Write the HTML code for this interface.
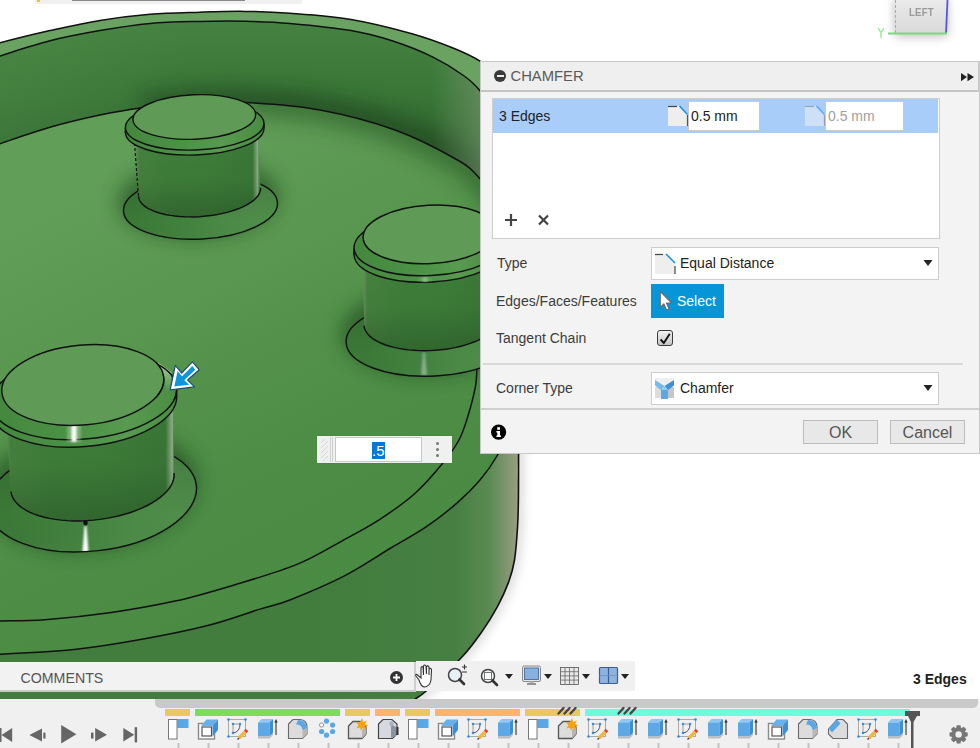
<!DOCTYPE html>
<html><head><meta charset="utf-8">
<style>
*{box-sizing:border-box;margin:0;padding:0}
html,body{width:980px;height:748px;overflow:hidden;background:#fff;font-family:"Liberation Sans",sans-serif;color:#3c3c3c;position:relative}
.abs{position:absolute;white-space:nowrap;line-height:normal}
#model{position:absolute;left:0;top:0}
.t14{font-size:14px}
</style></head>
<body>
<svg id="model" width="980" height="748" viewBox="0 0 980 748"><defs>
<linearGradient id="gWall" gradientUnits="userSpaceOnUse" x1="0" y1="20" x2="0" y2="180"><stop offset="0" stop-color="#468342"/><stop offset="0.45" stop-color="#3a7737"/><stop offset="1" stop-color="#2c5e2b"/></linearGradient>
<linearGradient id="gWallH" gradientUnits="userSpaceOnUse" x1="0" y1="0" x2="480" y2="0"><stop offset="0" stop-color="#5a9652" stop-opacity="0.3"/><stop offset="0.4" stop-color="#5a9652" stop-opacity="0"/><stop offset="0.9" stop-color="#8fa386" stop-opacity="0"/><stop offset="1" stop-color="#8fa386" stop-opacity="0.42"/></linearGradient>
<linearGradient id="gOuterWall" gradientUnits="userSpaceOnUse" x1="300" y1="0" x2="520" y2="0"><stop offset="0" stop-color="#427d3e"/><stop offset="0.7" stop-color="#467f41"/><stop offset="0.86" stop-color="#5a8a52"/><stop offset="1" stop-color="#9c9f87"/></linearGradient>
<linearGradient id="gFloor" gradientUnits="userSpaceOnUse" x1="150" y1="150" x2="380" y2="620"><stop offset="0" stop-color="#619e58"/><stop offset="0.3" stop-color="#59964f"/><stop offset="0.62" stop-color="#4d8d46"/><stop offset="1" stop-color="#498a42"/></linearGradient>
<filter id="blurA" x="-50%" y="-50%" width="200%" height="200%"><feGaussianBlur stdDeviation="6"/></filter>
<filter id="blurB" x="-50%" y="-50%" width="200%" height="200%"><feGaussianBlur stdDeviation="10"/></filter>
<filter id="blurS" x="-50%" y="-50%" width="200%" height="200%"><feGaussianBlur stdDeviation="9"/></filter>
<linearGradient id="gCyl1" gradientUnits="userSpaceOnUse" x1="134" y1="0" x2="259" y2="0"><stop offset="0" stop-color="#6f9668"/><stop offset="0.04" stop-color="#46823f"/><stop offset="0.3" stop-color="#3e7f3a"/><stop offset="0.6" stop-color="#3d7e39"/><stop offset="0.95" stop-color="#3a7837"/><stop offset="0.99" stop-color="#8fae89"/><stop offset="1" stop-color="#4e8849"/></linearGradient>
<linearGradient id="gCham1" gradientUnits="userSpaceOnUse" x1="134" y1="0" x2="259" y2="0"><stop offset="0" stop-color="#45893f"/><stop offset="0.45" stop-color="#4d9447"/><stop offset="0.7" stop-color="#579a50"/><stop offset="1" stop-color="#4a8d43"/></linearGradient>
<linearGradient id="gBase1" gradientUnits="userSpaceOnUse" x1="134" y1="0" x2="259" y2="0"><stop offset="0" stop-color="#3b7937"/><stop offset="0.45" stop-color="#438340"/><stop offset="0.75" stop-color="#4c8b47"/><stop offset="1" stop-color="#4f8d4a"/></linearGradient>
<clipPath id="cBase1"><ellipse cx="200.5" cy="207.0" rx="77.1" ry="32.0" transform="rotate(-3.2 200.5 207.0)" /></clipPath>
<clipPath id="cCham1"><ellipse cx="194.7" cy="130.5" rx="69.3" ry="24.5" transform="rotate(-1.9 194.7 130.5)" /></clipPath><linearGradient id="gCyl2" gradientUnits="userSpaceOnUse" x1="362" y1="0" x2="497" y2="0"><stop offset="0" stop-color="#6f9668"/><stop offset="0.04" stop-color="#46823f"/><stop offset="0.3" stop-color="#3e7f3a"/><stop offset="0.6" stop-color="#3d7e39"/><stop offset="0.95" stop-color="#3a7837"/><stop offset="0.99" stop-color="#8fae89"/><stop offset="1" stop-color="#4e8849"/></linearGradient>
<linearGradient id="gCham2" gradientUnits="userSpaceOnUse" x1="362" y1="0" x2="497" y2="0"><stop offset="0" stop-color="#45893f"/><stop offset="0.45" stop-color="#4d9447"/><stop offset="0.7" stop-color="#579a50"/><stop offset="1" stop-color="#4a8d43"/></linearGradient>
<linearGradient id="gBase2" gradientUnits="userSpaceOnUse" x1="362" y1="0" x2="497" y2="0"><stop offset="0" stop-color="#3b7937"/><stop offset="0.45" stop-color="#438340"/><stop offset="0.75" stop-color="#4c8b47"/><stop offset="1" stop-color="#4f8d4a"/></linearGradient>
<clipPath id="cBase2"><ellipse cx="433.0" cy="338.0" rx="87.0" ry="38.0" transform="rotate(-3 433.0 338.0)" /></clipPath>
<clipPath id="cCham2"><ellipse cx="430.0" cy="251.0" rx="76.0" ry="31.0" transform="rotate(-3 430.0 251.0)" /></clipPath><linearGradient id="gCyl3" gradientUnits="userSpaceOnUse" x1="4" y1="0" x2="174" y2="0"><stop offset="0" stop-color="#6f9668"/><stop offset="0.04" stop-color="#46823f"/><stop offset="0.3" stop-color="#3e7f3a"/><stop offset="0.6" stop-color="#3d7e39"/><stop offset="0.95" stop-color="#3a7837"/><stop offset="0.99" stop-color="#8fae89"/><stop offset="1" stop-color="#4e8849"/></linearGradient>
<linearGradient id="gCham3" gradientUnits="userSpaceOnUse" x1="4" y1="0" x2="174" y2="0"><stop offset="0" stop-color="#45893f"/><stop offset="0.45" stop-color="#4d9447"/><stop offset="0.7" stop-color="#579a50"/><stop offset="1" stop-color="#4a8d43"/></linearGradient>
<linearGradient id="gBase3" gradientUnits="userSpaceOnUse" x1="4" y1="0" x2="174" y2="0"><stop offset="0" stop-color="#3b7937"/><stop offset="0.45" stop-color="#438340"/><stop offset="0.75" stop-color="#4c8b47"/><stop offset="1" stop-color="#4f8d4a"/></linearGradient>
<clipPath id="cBase3"><ellipse cx="92.0" cy="497.0" rx="105.0" ry="54.0" transform="rotate(-6.5 92.0 497.0)" /></clipPath>
<clipPath id="cCham3"><ellipse cx="84.0" cy="403.5" rx="93.0" ry="43.0" transform="rotate(-5.3 84.0 403.5)" /></clipPath><linearGradient id="gCylV" x1="0" y1="0" x2="0" y2="1"><stop offset="0" stop-color="#000" stop-opacity="0"/><stop offset="0.55" stop-color="#000" stop-opacity="0.04"/><stop offset="1" stop-color="#000" stop-opacity="0.2"/></linearGradient><linearGradient id="gBaseV" x1="0" y1="0" x2="0" y2="1"><stop offset="0" stop-color="#000" stop-opacity="0.15"/><stop offset="0.6" stop-color="#000" stop-opacity="0.0"/><stop offset="1" stop-color="#fff" stop-opacity="0.05"/></linearGradient><filter id="blurH" x="-200%" y="-50%" width="500%" height="200%"><feGaussianBlur stdDeviation="1.2"/></filter><clipPath id="cWall"><path d="M-20.0 63.0 C-16.7 61.9 -11.7 59.8 0.0 56.1 C11.7 52.4 33.3 45.0 50.0 40.8 C66.7 36.5 83.3 33.5 100.0 30.6 C116.7 27.7 133.3 25.0 150.0 23.5 C166.7 22.0 184.2 21.8 200.0 21.4 C215.8 21.0 230.0 20.9 245.0 21.2 C260.0 21.6 272.3 21.9 290.0 23.5 C307.7 25.1 334.0 27.7 351.0 30.6 C368.0 33.5 378.3 36.4 392.0 40.8 C405.7 45.2 421.1 51.3 433.0 57.1 C444.9 62.9 455.7 69.9 463.5 75.5 C471.3 81.1 474.8 84.2 480.0 90.8 C485.2 97.4 492.5 111.0 495.0 115.0 L500.0 205.0 C496.7 200.6 487.1 186.2 480.0 178.8 C472.9 171.2 471.7 168.1 457.5 160.0 C443.3 151.9 417.9 138.3 395.0 130.0 C372.1 121.7 345.0 114.6 320.0 110.0 C295.0 105.4 266.7 103.6 245.0 102.5 C223.3 101.4 207.4 102.6 190.0 103.5 C172.6 104.4 155.8 106.1 140.8 108.0 C125.8 109.9 115.1 111.9 100.0 115.1 C84.9 118.3 66.7 122.5 50.0 127.3 C33.3 132.1 11.7 139.8 0.0 143.7 C-11.7 147.6 -16.7 149.8 -20.0 151.0 Z"/></clipPath></defs>
<g filter="url(#blurA)" opacity="0.25"><path d="M519.0 400.0 C518.9 409.0 518.7 437.3 518.6 454.0 C518.5 470.7 518.6 488.0 518.4 500.0 C518.2 512.0 518.2 516.0 517.6 526.0 C517.0 536.0 516.0 550.6 514.5 560.0 C513.0 569.4 511.4 574.6 508.5 582.4 C505.6 590.2 501.7 598.7 497.3 606.8 C492.9 614.9 488.2 622.7 482.3 631.1 C476.4 639.5 471.1 647.3 461.7 657.3 C452.3 667.3 434.1 683.9 426.2 691.0 C418.2 698.1 417.5 696.8 414.0 700.0 C410.5 703.2 406.5 708.3 405.0 710.0" fill="none" stroke="#000" stroke-width="6"/></g>
<path d="M-20.0 50.0 C-16.7 48.8 -11.7 46.1 0.0 42.9 C11.7 39.7 33.3 34.4 50.0 30.6 C66.7 26.9 83.3 23.1 100.0 20.4 C116.7 17.7 133.3 15.7 150.0 14.3 C166.7 12.9 184.2 12.7 200.0 12.2 C215.8 11.7 230.0 11.2 245.0 11.4 C260.0 11.6 272.3 12.0 290.0 13.3 C307.7 14.6 330.7 16.0 351.0 19.4 C371.3 22.8 395.0 28.9 412.0 33.7 C429.0 38.5 441.7 43.4 453.0 48.0 C464.3 52.6 472.2 55.9 480.0 61.2 C487.8 66.5 496.7 76.9 500.0 80.0 L530 120 L535 400 C532.3 409.0 521.4 437.3 518.6 454.0 C515.8 470.7 518.6 488.0 518.4 500.0 C518.2 512.0 518.2 516.0 517.6 526.0 C517.0 536.0 516.0 550.6 514.5 560.0 C513.0 569.4 511.4 574.6 508.5 582.4 C505.6 590.2 501.7 598.7 497.3 606.8 C492.9 614.9 488.2 622.7 482.3 631.1 C476.4 639.5 471.1 647.3 461.7 657.3 C452.3 667.3 434.1 683.9 426.2 691.0 C418.2 698.1 417.5 696.8 414.0 700.0 C410.5 703.2 406.5 708.3 405.0 710.0 L-20 720 Z" fill="url(#gFloor)"/>
<g filter="url(#blurB)" opacity="0.5"><path d="M245.0 102.5 C257.5 103.8 295.0 105.4 320.0 110.0 C345.0 114.6 372.1 121.7 395.0 130.0 C417.9 138.3 443.3 151.9 457.5 160.0 C471.7 168.1 472.9 171.2 480.0 178.8 C487.1 186.2 496.7 200.6 500.0 205.0" fill="none" stroke="#1f4a1f" stroke-width="26"/></g>
<path d="M-20.0 654.6 C-16.7 654.5 -15.7 655.1 0.0 654.2 C15.7 653.3 50.4 651.9 74.3 649.4 C98.2 646.9 120.8 643.1 143.3 639.0 C165.9 634.9 190.2 630.0 209.6 625.0 C229.0 620.0 246.6 613.3 260.0 609.1 C273.4 604.9 275.9 605.5 289.9 600.0 C303.9 594.5 327.1 584.9 343.9 576.2 C360.7 567.5 377.1 556.2 390.8 548.0 C404.5 539.8 415.1 534.3 426.1 526.9 C437.1 519.5 447.6 511.2 456.6 503.4 C465.6 495.6 473.3 487.9 480.0 480.0 C486.7 472.1 491.7 465.2 497.0 456.0 C502.3 446.8 509.5 430.2 512.0 425.0 L535 400 C532.3 409.0 521.4 437.3 518.6 454.0 C515.8 470.7 518.6 488.0 518.4 500.0 C518.2 512.0 518.2 516.0 517.6 526.0 C517.0 536.0 516.0 550.6 514.5 560.0 C513.0 569.4 511.4 574.6 508.5 582.4 C505.6 590.2 501.7 598.7 497.3 606.8 C492.9 614.9 488.2 622.7 482.3 631.1 C476.4 639.5 471.1 647.3 461.7 657.3 C452.3 667.3 434.1 683.9 426.2 691.0 C418.2 698.1 417.5 696.8 414.0 700.0 C410.5 703.2 406.5 708.3 405.0 710.0 L-20 720 Z" fill="url(#gOuterWall)"/>
<path d="M-20.0 63.0 C-16.7 61.9 -11.7 59.8 0.0 56.1 C11.7 52.4 33.3 45.0 50.0 40.8 C66.7 36.5 83.3 33.5 100.0 30.6 C116.7 27.7 133.3 25.0 150.0 23.5 C166.7 22.0 184.2 21.8 200.0 21.4 C215.8 21.0 230.0 20.9 245.0 21.2 C260.0 21.6 272.3 21.9 290.0 23.5 C307.7 25.1 334.0 27.7 351.0 30.6 C368.0 33.5 378.3 36.4 392.0 40.8 C405.7 45.2 421.1 51.3 433.0 57.1 C444.9 62.9 455.7 69.9 463.5 75.5 C471.3 81.1 474.8 84.2 480.0 90.8 C485.2 97.4 492.5 111.0 495.0 115.0 L500.0 205.0 C496.7 200.6 487.1 186.2 480.0 178.8 C472.9 171.2 471.7 168.1 457.5 160.0 C443.3 151.9 417.9 138.3 395.0 130.0 C372.1 121.7 345.0 114.6 320.0 110.0 C295.0 105.4 266.7 103.6 245.0 102.5 C223.3 101.4 207.4 102.6 190.0 103.5 C172.6 104.4 155.8 106.1 140.8 108.0 C125.8 109.9 115.1 111.9 100.0 115.1 C84.9 118.3 66.7 122.5 50.0 127.3 C33.3 132.1 11.7 139.8 0.0 143.7 C-11.7 147.6 -16.7 149.8 -20.0 151.0 Z" fill="url(#gWall)"/>
<g clip-path="url(#cWall)"><g filter="url(#blurB)" opacity="0.55"><path d="M140.8 108.0 C149.0 107.2 172.6 104.4 190.0 103.5 C207.4 102.6 223.3 101.4 245.0 102.5 C266.7 103.6 295.0 105.4 320.0 110.0 C345.0 114.6 372.1 121.7 395.0 130.0 C417.9 138.3 443.3 151.9 457.5 160.0 C471.7 168.1 472.9 171.2 480.0 178.8 C487.1 186.2 496.7 200.6 500.0 205.0" fill="none" stroke="#1a3c1a" stroke-width="30"/></g><path d="M-20.0 63.0 C-16.7 61.9 -11.7 59.8 0.0 56.1 C11.7 52.4 33.3 45.0 50.0 40.8 C66.7 36.5 83.3 33.5 100.0 30.6 C116.7 27.7 133.3 25.0 150.0 23.5 C166.7 22.0 184.2 21.8 200.0 21.4 C215.8 21.0 230.0 20.9 245.0 21.2 C260.0 21.6 272.3 21.9 290.0 23.5 C307.7 25.1 334.0 27.7 351.0 30.6 C368.0 33.5 378.3 36.4 392.0 40.8 C405.7 45.2 421.1 51.3 433.0 57.1 C444.9 62.9 455.7 69.9 463.5 75.5 C471.3 81.1 474.8 84.2 480.0 90.8 C485.2 97.4 492.5 111.0 495.0 115.0 L500.0 205.0 C496.7 200.6 487.1 186.2 480.0 178.8 C472.9 171.2 471.7 168.1 457.5 160.0 C443.3 151.9 417.9 138.3 395.0 130.0 C372.1 121.7 345.0 114.6 320.0 110.0 C295.0 105.4 266.7 103.6 245.0 102.5 C223.3 101.4 207.4 102.6 190.0 103.5 C172.6 104.4 155.8 106.1 140.8 108.0 C125.8 109.9 115.1 111.9 100.0 115.1 C84.9 118.3 66.7 122.5 50.0 127.3 C33.3 132.1 11.7 139.8 0.0 143.7 C-11.7 147.6 -16.7 149.8 -20.0 151.0 Z" fill="url(#gWallH)"/></g>
<path d="M-20.0 50.0 C-16.7 48.8 -11.7 46.1 0.0 42.9 C11.7 39.7 33.3 34.4 50.0 30.6 C66.7 26.9 83.3 23.1 100.0 20.4 C116.7 17.7 133.3 15.7 150.0 14.3 C166.7 12.9 184.2 12.7 200.0 12.2 C215.8 11.7 230.0 11.2 245.0 11.4 C260.0 11.6 272.3 12.0 290.0 13.3 C307.7 14.6 330.7 16.0 351.0 19.4 C371.3 22.8 395.0 28.9 412.0 33.7 C429.0 38.5 441.7 43.4 453.0 48.0 C464.3 52.6 472.2 55.9 480.0 61.2 C487.8 66.5 496.7 76.9 500.0 80.0 L495.0 115.0 C492.5 111.0 485.2 97.4 480.0 90.8 C474.8 84.2 471.3 81.1 463.5 75.5 C455.7 69.9 444.9 62.9 433.0 57.1 C421.1 51.3 405.7 45.2 392.0 40.8 C378.3 36.4 368.0 33.5 351.0 30.6 C334.0 27.7 307.7 25.1 290.0 23.5 C272.3 21.9 260.0 21.6 245.0 21.2 C230.0 20.9 215.8 21.0 200.0 21.4 C184.2 21.8 166.7 22.0 150.0 23.5 C133.3 25.0 116.7 27.7 100.0 30.6 C83.3 33.5 66.7 36.5 50.0 40.8 C33.3 45.0 11.7 52.4 0.0 56.1 C-11.7 59.8 -16.7 61.9 -20.0 63.0 Z" fill="#6aa361"/>
<path d="M-20.0 50.0 C-16.7 48.8 -11.7 46.1 0.0 42.9 C11.7 39.7 33.3 34.4 50.0 30.6 C66.7 26.9 83.3 23.1 100.0 20.4 C116.7 17.7 133.3 15.7 150.0 14.3 C166.7 12.9 184.2 12.7 200.0 12.2 C215.8 11.7 230.0 11.2 245.0 11.4 C260.0 11.6 272.3 12.0 290.0 13.3 C307.7 14.6 330.7 16.0 351.0 19.4 C371.3 22.8 395.0 28.9 412.0 33.7 C429.0 38.5 441.7 43.4 453.0 48.0 C464.3 52.6 472.2 55.9 480.0 61.2 C487.8 66.5 496.7 76.9 500.0 80.0" fill="none" stroke="#111" stroke-width="1.5"/>
<path d="M-20.0 63.0 C-16.7 61.9 -11.7 59.8 0.0 56.1 C11.7 52.4 33.3 45.0 50.0 40.8 C66.7 36.5 83.3 33.5 100.0 30.6 C116.7 27.7 133.3 25.0 150.0 23.5 C166.7 22.0 184.2 21.8 200.0 21.4 C215.8 21.0 230.0 20.9 245.0 21.2 C260.0 21.6 272.3 21.9 290.0 23.5 C307.7 25.1 334.0 27.7 351.0 30.6 C368.0 33.5 378.3 36.4 392.0 40.8 C405.7 45.2 421.1 51.3 433.0 57.1 C444.9 62.9 455.7 69.9 463.5 75.5 C471.3 81.1 474.8 84.2 480.0 90.8 C485.2 97.4 492.5 111.0 495.0 115.0" fill="none" stroke="#111" stroke-width="1.5"/>
<path d="M-20.0 151.0 C-16.7 149.8 -11.7 147.6 0.0 143.7 C11.7 139.8 33.3 132.1 50.0 127.3 C66.7 122.5 84.9 118.3 100.0 115.1 C115.1 111.9 125.8 109.9 140.8 108.0 C155.8 106.1 172.6 104.4 190.0 103.5 C207.4 102.6 223.3 101.4 245.0 102.5 C266.7 103.6 295.0 105.4 320.0 110.0 C345.0 114.6 372.1 121.7 395.0 130.0 C417.9 138.3 443.3 151.9 457.5 160.0 C471.7 168.1 472.9 171.2 480.0 178.8 C487.1 186.2 496.7 200.6 500.0 205.0" fill="none" stroke="#111" stroke-width="1.5"/>
<path d="M-20.0 621.5 C-16.7 621.4 -10.8 621.3 0.0 621.0 C10.8 620.7 26.5 621.1 45.1 619.7 C63.7 618.3 89.7 615.6 111.4 612.5 C133.1 609.4 154.8 605.6 175.1 601.1 C195.4 596.6 213.2 591.3 233.5 585.2 C253.8 579.1 278.5 572.0 296.9 564.4 C315.3 556.8 330.2 547.2 343.9 539.8 C357.6 532.4 367.4 527.4 379.1 519.8 C390.8 512.2 403.7 503.4 414.3 494.0 C424.9 484.6 435.1 472.5 442.5 463.5 C449.9 454.5 454.7 448.0 459.0 440.0 C463.3 432.0 465.4 424.4 468.1 415.5 C470.8 406.6 473.9 394.9 475.4 386.6 C476.9 378.3 476.6 372.4 477.0 365.5 C477.4 358.6 477.4 348.4 477.5 345.0" fill="none" stroke="#111" stroke-width="1.5"/>
<path d="M-20.0 654.6 C-16.7 654.5 -15.7 655.1 0.0 654.2 C15.7 653.3 50.4 651.9 74.3 649.4 C98.2 646.9 120.8 643.1 143.3 639.0 C165.9 634.9 190.2 630.0 209.6 625.0 C229.0 620.0 246.6 613.3 260.0 609.1 C273.4 604.9 275.9 605.5 289.9 600.0 C303.9 594.5 327.1 584.9 343.9 576.2 C360.7 567.5 377.1 556.2 390.8 548.0 C404.5 539.8 415.1 534.3 426.1 526.9 C437.1 519.5 447.6 511.2 456.6 503.4 C465.6 495.6 473.3 487.9 480.0 480.0 C486.7 472.1 491.7 465.2 497.0 456.0 C502.3 446.8 509.5 430.2 512.0 425.0" fill="none" stroke="#111" stroke-width="1.5"/>
<path d="M519.0 400.0 C518.9 409.0 518.7 437.3 518.6 454.0 C518.5 470.7 518.6 488.0 518.4 500.0 C518.2 512.0 518.2 516.0 517.6 526.0 C517.0 536.0 516.0 550.6 514.5 560.0 C513.0 569.4 511.4 574.6 508.5 582.4 C505.6 590.2 501.7 598.7 497.3 606.8 C492.9 614.9 488.2 622.7 482.3 631.1 C476.4 639.5 471.1 647.3 461.7 657.3 C452.3 667.3 434.1 683.9 426.2 691.0 C418.2 698.1 417.5 696.8 414.0 700.0 C410.5 703.2 406.5 708.3 405.0 710.0" fill="none" stroke="#111" stroke-width="1.6"/>
<g filter="url(#blurS)" opacity="0.6"><ellipse cx="198.5" cy="199.0" rx="81.1" ry="40.0" transform="rotate(-3.2 198.5 199.0)" fill="#1e4a1c"/></g>
<ellipse cx="200.5" cy="207.0" rx="77.1" ry="32.0" transform="rotate(-3.2 200.5 207.0)" fill="url(#gBase1)"/>
<g clip-path="url(#cBase1)"><rect x="113" y="165" width="174" height="94" fill="url(#gBaseV)"/></g>
<ellipse cx="200.5" cy="207.0" rx="77.1" ry="32.0" transform="rotate(-3.2 200.5 207.0)" fill="none" stroke="#111" stroke-width="1.45"/>
<path d="M134.5 135.0 L138.5 196.5 L138.5 196.5 L138.9 198.4 L139.6 200.3 L140.7 202.2 L142.2 204.0 L144.1 205.7 L146.3 207.3 L148.9 208.8 L151.8 210.2 L155.0 211.5 L158.5 212.7 L162.3 213.7 L166.3 214.7 L170.5 215.4 L174.9 216.0 L179.5 216.5 L184.2 216.8 L189.0 216.9 L193.8 216.9 L198.7 216.7 L203.7 216.3 L208.5 215.8 L213.4 215.2 L218.1 214.4 L222.7 213.4 L227.2 212.4 L231.4 211.1 L235.5 209.8 L239.4 208.4 L242.9 206.8 L246.3 205.2 L249.2 203.4 L251.9 201.6 L254.3 199.7 L256.2 197.8 L257.9 195.9 L259.1 193.9 L259.9 191.9 L260.4 189.9 L260.5 187.9 L258.5 135.0 Z" fill="url(#gCyl1)"/>
<path d="M134.5 135.0 L138.5 196.5 L138.5 196.5 L138.9 198.4 L139.6 200.3 L140.7 202.2 L142.2 204.0 L144.1 205.7 L146.3 207.3 L148.9 208.8 L151.8 210.2 L155.0 211.5 L158.5 212.7 L162.3 213.7 L166.3 214.7 L170.5 215.4 L174.9 216.0 L179.5 216.5 L184.2 216.8 L189.0 216.9 L193.8 216.9 L198.7 216.7 L203.7 216.3 L208.5 215.8 L213.4 215.2 L218.1 214.4 L222.7 213.4 L227.2 212.4 L231.4 211.1 L235.5 209.8 L239.4 208.4 L242.9 206.8 L246.3 205.2 L249.2 203.4 L251.9 201.6 L254.3 199.7 L256.2 197.8 L257.9 195.9 L259.1 193.9 L259.9 191.9 L260.4 189.9 L260.5 187.9 L258.5 135.0 Z" fill="url(#gCylV)"/>
<path d="M138.5 196.5 L138.9 198.4 L139.6 200.3 L140.7 202.2 L142.2 204.0 L144.1 205.7 L146.3 207.3 L148.9 208.8 L151.8 210.2 L155.0 211.5 L158.5 212.7 L162.3 213.7 L166.3 214.7 L170.5 215.4 L174.9 216.0 L179.5 216.5 L184.2 216.8 L189.0 216.9 L193.8 216.9 L198.7 216.7 L203.7 216.3 L208.5 215.8 L213.4 215.2 L218.1 214.4 L222.7 213.4 L227.2 212.4 L231.4 211.1 L235.5 209.8 L239.4 208.4 L242.9 206.8 L246.3 205.2 L249.2 203.4 L251.9 201.6 L254.3 199.7 L256.2 197.8 L257.9 195.9 L259.1 193.9 L259.9 191.9 L260.4 189.9 L260.5 187.9 " fill="none" stroke="#111" stroke-width="1.45"/>
<path d="M134.5 143.0 L138.5 196.5" stroke="#111" stroke-width="1.2" stroke-dasharray="3 2"/>
<ellipse cx="194.7" cy="130.5" rx="69.3" ry="24.5" transform="rotate(-1.9 194.7 130.5)" fill="url(#gCham1)" stroke="#111" stroke-width="1.45"/>
<path d="M125.4 127.8 L125.4 132.8 L264.0 128.2 L264.0 123.2 Z" fill="url(#gCham1)"/>
<path d="M125.4 127.8 V132.8 M264.0 123.2 V128.2" stroke="#111" stroke-width="1.45"/>
<ellipse cx="194.7" cy="125.5" rx="69.3" ry="24.5" transform="rotate(-1.9 194.7 125.5)" fill="url(#gCham1)" stroke="#111" stroke-width="1.45"/>
<ellipse cx="194.3" cy="117.0" rx="61.4" ry="22.2" transform="rotate(-2.5 194.3 117.0)" fill="#5f9b56" stroke="#111" stroke-width="1.45"/>
<g filter="url(#blurS)" opacity="0.6"><ellipse cx="431.0" cy="330.0" rx="91.0" ry="46.0" transform="rotate(-3 431.0 330.0)" fill="#1e4a1c"/></g>
<ellipse cx="433.0" cy="338.0" rx="87.0" ry="38.0" transform="rotate(-3 433.0 338.0)" fill="url(#gBase2)"/>
<g clip-path="url(#cBase2)"><rect x="336" y="290" width="194" height="106" fill="url(#gBaseV)"/></g>
<g clip-path="url(#cBase2)" opacity="0.35"><g filter="url(#blurH)"><path d="M421 375 L423 352 L425 352 L427 375 Z" fill="#fff"/></g></g>
<ellipse cx="433.0" cy="338.0" rx="87.0" ry="38.0" transform="rotate(-3 433.0 338.0)" fill="none" stroke="#111" stroke-width="1.45"/>
<path d="M362.9 255.0 L364.1 325.5 L364.1 325.5 L364.4 327.8 L365.2 330.0 L366.4 332.2 L368.0 334.3 L370.0 336.4 L372.4 338.3 L375.2 340.2 L378.4 341.9 L381.9 343.5 L385.7 345.0 L389.8 346.3 L394.2 347.4 L398.8 348.4 L403.7 349.2 L408.7 349.9 L413.8 350.3 L419.1 350.6 L424.4 350.7 L429.8 350.6 L435.2 350.3 L440.5 349.8 L445.8 349.2 L451.0 348.4 L456.1 347.4 L461.0 346.2 L465.7 344.9 L470.2 343.4 L474.5 341.8 L478.4 340.1 L482.1 338.2 L485.4 336.3 L488.3 334.2 L490.9 332.1 L493.1 329.9 L494.9 327.7 L496.3 325.4 L497.3 323.1 L497.8 320.8 L497.9 318.5 L497.0 255.0 Z" fill="url(#gCyl2)"/>
<path d="M362.9 255.0 L364.1 325.5 L364.1 325.5 L364.4 327.8 L365.2 330.0 L366.4 332.2 L368.0 334.3 L370.0 336.4 L372.4 338.3 L375.2 340.2 L378.4 341.9 L381.9 343.5 L385.7 345.0 L389.8 346.3 L394.2 347.4 L398.8 348.4 L403.7 349.2 L408.7 349.9 L413.8 350.3 L419.1 350.6 L424.4 350.7 L429.8 350.6 L435.2 350.3 L440.5 349.8 L445.8 349.2 L451.0 348.4 L456.1 347.4 L461.0 346.2 L465.7 344.9 L470.2 343.4 L474.5 341.8 L478.4 340.1 L482.1 338.2 L485.4 336.3 L488.3 334.2 L490.9 332.1 L493.1 329.9 L494.9 327.7 L496.3 325.4 L497.3 323.1 L497.8 320.8 L497.9 318.5 L497.0 255.0 Z" fill="url(#gCylV)"/>
<path d="M364.1 325.5 L364.4 327.8 L365.2 330.0 L366.4 332.2 L368.0 334.3 L370.0 336.4 L372.4 338.3 L375.2 340.2 L378.4 341.9 L381.9 343.5 L385.7 345.0 L389.8 346.3 L394.2 347.4 L398.8 348.4 L403.7 349.2 L408.7 349.9 L413.8 350.3 L419.1 350.6 L424.4 350.7 L429.8 350.6 L435.2 350.3 L440.5 349.8 L445.8 349.2 L451.0 348.4 L456.1 347.4 L461.0 346.2 L465.7 344.9 L470.2 343.4 L474.5 341.8 L478.4 340.1 L482.1 338.2 L485.4 336.3 L488.3 334.2 L490.9 332.1 L493.1 329.9 L494.9 327.7 L496.3 325.4 L497.3 323.1 L497.8 320.8 L497.9 318.5 " fill="none" stroke="#111" stroke-width="1.45"/>
<ellipse cx="430.0" cy="251.0" rx="76.0" ry="31.0" transform="rotate(-3 430.0 251.0)" fill="url(#gCham2)" stroke="#111" stroke-width="1.45"/>
<path d="M354.1 248.5 L354.1 255.0 L505.9 247.0 L505.9 240.5 Z" fill="url(#gCham2)"/>
<path d="M354.1 248.5 V255.0 M505.9 240.5 V247.0" stroke="#111" stroke-width="1.45"/>
<ellipse cx="430.0" cy="244.5" rx="76.0" ry="31.0" transform="rotate(-3 430.0 244.5)" fill="url(#gCham2)" stroke="#111" stroke-width="1.45"/>
<g clip-path="url(#cCham2)" opacity="0.35"><g filter="url(#blurH)"><rect x="422.5" y="277" width="5" height="7" fill="#fff"/><rect x="418" y="277" width="14" height="7" fill="#fff" opacity="0.25"/></g></g>
<ellipse cx="430.0" cy="234.4" rx="67.0" ry="29.2" transform="rotate(-3 430.0 234.4)" fill="#5f9b56" stroke="#111" stroke-width="1.45"/>
<g filter="url(#blurS)" opacity="0.6"><ellipse cx="90.0" cy="489.0" rx="109.0" ry="62.0" transform="rotate(-6.5 90.0 489.0)" fill="#1e4a1c"/></g>
<ellipse cx="92.0" cy="497.0" rx="105.0" ry="54.0" transform="rotate(-6.5 92.0 497.0)" fill="url(#gBase3)"/>
<g clip-path="url(#cBase3)"><rect x="-23" y="433" width="230" height="138" fill="url(#gBaseV)"/></g>
<g clip-path="url(#cBase3)" opacity="1.0"><g filter="url(#blurH)"><path d="M82.5 552 L84.5 526 L86.5 526 L88.5 552 Z" fill="#fff"/></g></g>
<ellipse cx="92.0" cy="497.0" rx="105.0" ry="54.0" transform="rotate(-6.5 92.0 497.0)" fill="none" stroke="#111" stroke-width="1.45"/>
<path d="M4.5 398.0 L11.0 491.7 L11.0 491.7 L11.6 494.7 L12.8 497.6 L14.4 500.4 L16.6 503.0 L19.2 505.6 L22.3 508.0 L25.9 510.2 L29.9 512.3 L34.3 514.1 L39.1 515.8 L44.3 517.2 L49.7 518.4 L55.4 519.4 L61.4 520.1 L67.6 520.6 L73.9 520.9 L80.4 520.9 L86.9 520.6 L93.5 520.1 L100.0 519.4 L106.5 518.4 L113.0 517.1 L119.3 515.7 L125.4 514.0 L131.3 512.2 L136.9 510.1 L142.3 507.9 L147.3 505.5 L152.0 502.9 L156.3 500.2 L160.2 497.4 L163.6 494.5 L166.6 491.5 L169.1 488.5 L171.1 485.4 L172.6 482.3 L173.6 479.2 L174.1 476.2 L174.0 473.1 L173.0 398.0 Z" fill="url(#gCyl3)"/>
<path d="M4.5 398.0 L11.0 491.7 L11.0 491.7 L11.6 494.7 L12.8 497.6 L14.4 500.4 L16.6 503.0 L19.2 505.6 L22.3 508.0 L25.9 510.2 L29.9 512.3 L34.3 514.1 L39.1 515.8 L44.3 517.2 L49.7 518.4 L55.4 519.4 L61.4 520.1 L67.6 520.6 L73.9 520.9 L80.4 520.9 L86.9 520.6 L93.5 520.1 L100.0 519.4 L106.5 518.4 L113.0 517.1 L119.3 515.7 L125.4 514.0 L131.3 512.2 L136.9 510.1 L142.3 507.9 L147.3 505.5 L152.0 502.9 L156.3 500.2 L160.2 497.4 L163.6 494.5 L166.6 491.5 L169.1 488.5 L171.1 485.4 L172.6 482.3 L173.6 479.2 L174.1 476.2 L174.0 473.1 L173.0 398.0 Z" fill="url(#gCylV)"/>
<ellipse cx="85.5" cy="522.7583017734397" rx="2.2" ry="2.8" fill="#111"/>
<path d="M11.0 491.7 L11.6 494.7 L12.8 497.6 L14.4 500.4 L16.6 503.0 L19.2 505.6 L22.3 508.0 L25.9 510.2 L29.9 512.3 L34.3 514.1 L39.1 515.8 L44.3 517.2 L49.7 518.4 L55.4 519.4 L61.4 520.1 L67.6 520.6 L73.9 520.9 L80.4 520.9 L86.9 520.6 L93.5 520.1 L100.0 519.4 L106.5 518.4 L113.0 517.1 L119.3 515.7 L125.4 514.0 L131.3 512.2 L136.9 510.1 L142.3 507.9 L147.3 505.5 L152.0 502.9 L156.3 500.2 L160.2 497.4 L163.6 494.5 L166.6 491.5 L169.1 488.5 L171.1 485.4 L172.6 482.3 L173.6 479.2 L174.1 476.2 L174.0 473.1 " fill="none" stroke="#111" stroke-width="1.45"/>
<ellipse cx="84.0" cy="403.5" rx="93.0" ry="43.0" transform="rotate(-5.3 84.0 403.5)" fill="url(#gCham3)" stroke="#111" stroke-width="1.45"/>
<path d="M-8.6 404.6 L-8.6 412.1 L176.6 394.9 L176.6 387.4 Z" fill="url(#gCham3)"/>
<path d="M-8.6 404.6 V412.1 M176.6 387.4 V394.9" stroke="#111" stroke-width="1.45"/>
<ellipse cx="84.0" cy="396.0" rx="93.0" ry="43.0" transform="rotate(-5.3 84.0 396.0)" fill="url(#gCham3)" stroke="#111" stroke-width="1.45"/>
<g clip-path="url(#cCham3)" opacity="1.0"><g filter="url(#blurH)"><rect x="71.5" y="424" width="5" height="18" fill="#fff"/><rect x="67" y="424" width="14" height="18" fill="#fff" opacity="0.25"/></g></g>
<ellipse cx="82.8" cy="385.0" rx="81.3" ry="39.9" transform="rotate(-5.3 82.8 385.0)" fill="#5f9b56" stroke="#111" stroke-width="1.45"/>
<defs><linearGradient id="gPatch" x1="0" y1="0" x2="0" y2="1"><stop offset="0" stop-color="#b5d6ae" stop-opacity="0.9"/><stop offset="1" stop-color="#b5d6ae" stop-opacity="0"/></linearGradient></defs>
<path d="M158 362.5 L171.5 372 L170 392 L166 392 L164.5 378 Z" fill="url(#gPatch)"/>
<g clip-path="inset(0)"><clipPath id="cPatch"><rect x="157" y="356" width="25" height="44"/></clipPath></g>
<g clip-path="url(#cPatch)"><ellipse cx="84.0" cy="396.0" rx="93.0" ry="43.0" transform="rotate(-5.3 84.0 396.0)" fill="none" stroke="#111" stroke-width="1.3"/><ellipse cx="82.8" cy="385.0" rx="81.3" ry="39.9" transform="rotate(-5.3 82.8 385.0)" fill="none" stroke="#111" stroke-width="1.3"/></g>
<g transform="translate(0.3 0.9)"><path d="M169.9 389 L175 364.4 L181.4 372.1 L192.1 360.9 L199 368.9 L187.3 379.1 L194.2 386 Z" fill="#fff" stroke="#1f4d6e" stroke-width="1.2" stroke-linejoin="round"/>
<path d="M174 385.5 L177.3 370 L181.8 375.4 L192 365.2 L195 368.9 L184 379.3 L188.8 383.8 Z" fill="#0f96d8"/></g></svg>
<!-- top-left toolbar remnant -->
<div class="abs" style="left:35px;top:0;width:267px;height:4px;background:#f0f0f0"></div>
<div class="abs" style="left:37px;top:0;width:3px;height:2px;background:#f2c02e"></div>
<div class="abs" style="left:72px;top:0;width:173px;height:1px;background:#8a8a8a"></div>
<!-- viewcube -->
<div class="abs" style="left:895px;top:-5px;width:52px;height:38px;background:linear-gradient(#ececec,#dadada);box-shadow:0 3px 10px rgba(0,0,0,0.28)"></div>
<div class="abs" style="left:895px;top:0;width:1px;height:33px;border-left:1px dashed #aaa"></div>
<div class="abs" style="left:908.5px;top:5.5px;font-size:10.5px;font-weight:bold;color:#9a9a9a;letter-spacing:0.2px;transform:scaleX(0.92);transform-origin:left">LEFT</div>
<svg class="abs" style="left:875px;top:0" width="80" height="42">
  <path d="M72.5 0 L71 33.5" stroke="#5555ee" stroke-width="1.8"/>
  <path d="M13 33.5 H72" stroke="#7ed87e" stroke-width="2"/>
  <path d="M3 28 L6 32.5 L9 28 M6 32.5 V38" stroke="#8ee88e" stroke-width="1.3" fill="none"/>
</svg>
<!-- small input -->
<div class="abs" style="left:317px;top:436px;width:135px;height:27px;background:#f0f0f0;box-shadow:0 0 1px rgba(0,0,0,0.2)"></div>
<div class="abs" style="left:321px;top:439px;width:7px;height:22px;background:repeating-linear-gradient(135deg,#f0f0f0 0 2.5px,#d6d6d6 2.5px 3.5px)"></div>
<div class="abs" style="left:330px;top:437px;width:3px;height:25px;border-left:1px solid #d0d0d0;border-right:1px solid #d0d0d0"></div>
<div class="abs" style="left:335px;top:437px;width:87px;height:25px;background:#fff;border:1px solid #c8c8c8"></div>
<div class="abs" style="left:372px;top:442px;width:13px;height:17px;background:#0078d7"></div>
<div class="abs t14" style="left:372px;top:442px;color:#fff;font-size:15px">.5</div>
<div class="abs" style="left:435.5px;top:441.5px;width:3.2px;height:3.2px;border-radius:50%;background:#777"></div>
<div class="abs" style="left:435.5px;top:447.5px;width:3.2px;height:3.2px;border-radius:50%;background:#777"></div>
<div class="abs" style="left:435.5px;top:454px;width:3.2px;height:3.2px;border-radius:50%;background:#777"></div>
<div id="dlg" class="abs" style="left:480px;top:61px;width:500px;height:393px;background:#f3f3f3;border:1px solid #c8c8c8;border-right:1px solid #c8c8c8">
</div>
<div class="abs" style="left:481px;top:62px;width:497px;height:28px;background:#efefef"></div>
<div class="abs" style="left:481px;top:90px;width:498px;height:2px;background:#c4c4c4"></div><div class="abs" style="left:978px;top:62px;width:1px;height:28px;background:#c8c8c8"></div>
<div class="abs" style="left:494px;top:70px;width:12px;height:12px;border-radius:50%;background:#3a3a3a"></div>
<div class="abs" style="left:496.5px;top:75px;width:7px;height:2px;background:#efefef"></div>
<div class="abs" style="left:510.5px;top:68px;color:#5a5a5a;font-size:14.8px">CHAMFER</div>
<svg class="abs" style="left:960px;top:72px" width="16" height="11"><path d="M1 1 L7 5 L1 9.2 Z M7.5 1 L14 5 L7.5 9.2 Z" fill="#222"/></svg>

<!-- table -->
<div class="abs" style="left:492px;top:98px;width:448px;height:141px;background:#fff;border:1px solid #cdcdcd"></div>
<div class="abs" style="left:493px;top:99px;width:445px;height:34px;background:#a9cdf9"></div>
<div class="abs t14" style="left:499px;top:108px;color:#222">3 Edges</div>
<svg class="abs" style="left:667px;top:105px" width="22" height="22">
  <path d="M1 1 H13 L21 9 V21 H1 Z" fill="#eeeeee"/>
  <path d="M1 1.5 H10" stroke="#444" stroke-width="1.2"/>
  <path d="M12.5 1 L20.5 9.5" stroke="#1c8fe0" stroke-width="1.6"/>
  <path d="M20.5 10 V21" stroke="#555" stroke-width="1.2"/>
</svg>
<div class="abs" style="left:688px;top:101px;width:72px;height:30px;background:#fff;border:1px solid #c9c9c9"></div>
<div class="abs t14" style="left:691px;top:108px;color:#222">0.5 mm</div>
<svg class="abs" style="left:804px;top:105px" width="22" height="22">
  <path d="M1 1 H13 L21 9 V21 H1 Z" fill="#cde0f6"/>
  <path d="M1 1.5 H10" stroke="#9aa" stroke-width="1.2"/>
  <path d="M12.5 1 L20.5 9.5" stroke="#5aaaf0" stroke-width="1.6"/>
  <path d="M20.5 10 V21" stroke="#99a" stroke-width="1.2"/>
</svg>
<div class="abs" style="left:825px;top:101px;width:79px;height:30px;background:#fff;border:1px solid #c9c9c9"></div>
<div class="abs t14" style="left:828px;top:108px;color:#a0a0a0">0.5 mm</div>
<svg class="abs" style="left:503px;top:212px" width="50" height="16">
  <path d="M8 2 V14 M2 8 H14" stroke="#444" stroke-width="2.2"/>
  <path d="M36 3.5 L45 12.5 M45 3.5 L36 12.5" stroke="#444" stroke-width="2.2"/>
</svg>

<div class="abs t14" style="left:497px;top:255px">Type</div>
<div class="abs" style="left:651px;top:247px;width:288px;height:33px;background:#fff;border:1px solid #cdcdcd"></div>
<svg class="abs" style="left:654px;top:253px" width="22" height="22">
  <path d="M1 1 H12 L21 10 V21 H1 Z" fill="#eeeeee"/>
  <path d="M1 1.5 H9" stroke="#444" stroke-width="1.2"/>
  <path d="M12 1 L21 10" stroke="#1c8fe0" stroke-width="1.6"/>
  <path d="M21 13 V21" stroke="#444" stroke-width="1.2"/>
</svg>
<div class="abs t14" style="left:680px;top:255px;color:#222">Equal Distance</div>
<svg class="abs" style="left:923px;top:259px" width="10" height="8"><path d="M0.5 1 H9.5 L5 7 Z" fill="#222"/></svg>

<div class="abs t14" style="left:496px;top:293px">Edges/Faces/Features</div>
<div class="abs" style="left:651px;top:284px;width:73px;height:34px;background:#0696d7"></div>
<svg class="abs" style="left:655px;top:288px" width="22" height="26"><path d="M5.3 3.5 V19.2 L8.8 15.8 L11.5 22 L14 21 L11.5 15 L16.7 15 Z" fill="#fff" stroke="#6a6a6a" stroke-width="1.1" stroke-linejoin="round"/></svg>
<div class="abs t14" style="left:677px;top:293px;color:#fff">Select</div>

<div class="abs t14" style="left:496px;top:330px">Tangent Chain</div>
<div class="abs" style="left:657px;top:330px;width:16px;height:16px;border:1.3px solid #3a3a3a;border-radius:3px;background:linear-gradient(#f2f2f2,#c4c4c4)"></div>
<svg class="abs" style="left:657px;top:330px" width="17" height="17"><path d="M3.6 9.5 L6.8 13 L12.8 3.8" stroke="#111" stroke-width="1.9" fill="none"/></svg>

<div class="abs" style="left:483px;top:363px;width:480px;height:2px;background:#d9d9d9"></div>

<div class="abs t14" style="left:496px;top:380px">Corner Type</div>
<div class="abs" style="left:651px;top:372px;width:288px;height:33px;background:#fff;border:1px solid #cdcdcd"></div>
<svg class="abs" style="left:653px;top:377px" width="23" height="23">
  <path d="M2 1 H21 V4 L11.5 10 L2 4 Z" fill="#efefef"/>
  <rect x="2" y="10" width="6" height="11" fill="#dcdcdc"/>
  <rect x="15" y="10" width="6" height="11" fill="#c6c6c6"/>
  <path d="M2 3 L11.5 9 L8 13 L2 8.5 Z" fill="#74baec"/>
  <path d="M21 3 V8.5 L15 13 L11.5 9 Z" fill="#3f8fd2"/>
  <rect x="8" y="12" width="7" height="10" fill="#5ca8e3"/>
  <path d="M8 13 L11.5 9 L15 13 Z" fill="#8ccaf2"/>
</svg>
<div class="abs t14" style="left:680px;top:380px;color:#222">Chamfer</div>
<svg class="abs" style="left:923px;top:384px" width="10" height="8"><path d="M0.5 1 H9.5 L5 7 Z" fill="#222"/></svg>

<div class="abs" style="left:481px;top:408px;width:498px;height:2px;background:#cfcfcf"></div>
<svg class="abs" style="left:490px;top:424px" width="17" height="17"><circle cx="8.6" cy="8.1" r="7.6" fill="#000"/><rect x="7.2" y="3.2" width="2.8" height="2.6" fill="#fff"/><path d="M6.4 7 H10 V11.6 H11 V13 H6.4 V11.6 H7.3 V8.4 H6.4 Z" fill="#fff"/></svg>
<div class="abs" style="left:803px;top:420px;width:75px;height:24px;background:#e8e8e8;border:1px solid #bdbdbd"></div>
<div class="abs" style="left:803px;top:424px;width:75px;text-align:center;font-size:16px;color:#555">OK</div>
<div class="abs" style="left:890px;top:420px;width:75px;height:24px;background:#e8e8e8;border:1px solid #bdbdbd"></div>
<div class="abs" style="left:890px;top:424px;width:75px;text-align:center;font-size:16px;color:#555">Cancel</div>
<!-- comments bar -->
<div class="abs" style="left:0;top:662px;width:416px;height:30px;background:#f2f2f2;border-bottom:2px solid #c9c9c9;border-right:2px solid #cfcfcf"></div>
<div class="abs" style="left:20.5px;top:670px;color:#555;font-size:14.2px">COMMENTS</div>
<div class="abs" style="left:389.5px;top:671px;width:13px;height:13px;border-radius:50%;background:#333"></div>
<svg class="abs" style="left:389.5px;top:671px" width="13" height="13"><path d="M6.5 3 V10 M3 6.5 H10" stroke="#fff" stroke-width="1.8"/></svg>
<!-- nav toolbar -->
<div class="abs" style="left:416px;top:661px;width:219px;height:30px;background:#f0f0f0"></div>
<svg class="abs" style="left:412px;top:663px" width="226" height="28">
  <!-- hand -->
  <path d="M7 17 L4 13 Q3 11 5 11.5 L9 15 V5 Q9.5 3 11 4 L11.5 12 V3 Q12.5 1 14 3 L14.5 11 V3.5 Q16 2 17 4 L17 12 V6 Q18.5 4.5 19.5 6.5 L19 17 Q18 23 13 24 Q9 24 7 17 Z" fill="#fff" stroke="#333" stroke-width="1.1"/>
  <!-- zoom -->
  <circle cx="43" cy="12" r="6.5" fill="#e6f2f5" stroke="#444" stroke-width="1.5"/>
  <path d="M47.5 16.5 L52 21" stroke="#333" stroke-width="2.6" stroke-linecap="round"/>
  <path d="M50 4 H55 M52.5 1.5 V6.5 M50 9 H55" stroke="#333" stroke-width="1.1"/>
  <!-- zoom window -->
  <circle cx="76" cy="13" r="6.5" fill="#eef5f7" stroke="#444" stroke-width="1.5"/>
  <rect x="72.5" y="9.5" width="7" height="7" fill="#f8f8f8" stroke="#777" stroke-width="1"/>
  <path d="M80.5 17.5 L85 22" stroke="#333" stroke-width="2.6" stroke-linecap="round"/>
  <path d="M93 11 H101 L97 16 Z" fill="#222"/>
  <!-- display -->
  <rect x="110.5" y="3" width="18" height="15.5" rx="1.5" fill="#e6e6e6" stroke="#8a8a8a" stroke-width="1"/>
  <rect x="112.5" y="5" width="14" height="11.5" fill="#86b0de" stroke="#3b5f92" stroke-width="0.8"/>
  <path d="M117 18.5 H122 V20.5 H117 Z" fill="#bbb"/><path d="M115 21 H124" stroke="#777" stroke-width="1.5"/>
  <path d="M132 11 H140 L136 16 Z" fill="#222"/>
  <!-- grid -->
  <rect x="148.5" y="4.5" width="18" height="17" fill="#e8e8e8" stroke="#555" stroke-width="0.8"/>
  <path d="M148.5 8.7 H166.5 M148.5 12.9 H166.5 M148.5 17.1 H166.5 M153 4.5 V21.5 M157.5 4.5 V21.5 M162 4.5 V21.5" stroke="#666" stroke-width="0.8"/>
  <path d="M170 11 H178 L174 16 Z" fill="#222"/>
  <!-- viewports -->
  <rect x="187.5" y="4.5" width="18" height="16" rx="1" fill="#8fb3df" stroke="#3a5f95" stroke-width="1.2"/>
  <path d="M196.5 4.5 V20.5" stroke="#3a5f95" stroke-width="1.2"/><path d="M187.5 12.5 H205.5" stroke="#6a8fc0" stroke-width="0.8"/>
  <path d="M209 11 H217 L213 16 Z" fill="#222"/>
</svg>
<div class="abs" style="left:913px;top:671px;font-size:14px;font-weight:bold;color:#222">3 Edges</div>

<!-- timeline -->
<div class="abs" style="left:0;top:699px;width:980px;height:49px;background:#f0f0f0"></div>
<div class="abs" style="left:155px;top:699px;width:823px;height:9px;background:#c9c9c9;border-radius:0 0 5px 5px"></div>
<svg class="abs" style="left:0;top:699px" width="980" height="49" id="tl"><rect x="165" y="10" width="25" height="7" fill="#e8c860"/>
<rect x="195" y="10" width="145" height="7" fill="#7ddd58"/>
<rect x="345" y="10" width="25" height="7" fill="#e8c860"/>
<rect x="375" y="10" width="25" height="7" fill="#fdb36a"/>
<rect x="405" y="10" width="25" height="7" fill="#e8c860"/>
<rect x="435" y="10" width="85" height="7" fill="#fdb36a"/>
<rect x="525" y="10" width="55" height="7" fill="#e8c860"/>
<rect x="585" y="10" width="325" height="7" fill="#6dfbdb"/>
<path d="M558.5 14.5 L563.5 9" stroke="#484848" stroke-width="2.4" stroke-linecap="round"/><path d="M559.0 12 L560.5 13.5 M561.0 10 L562.5 11.5" stroke="#484848" stroke-width="1"/>
<path d="M564.5 14.5 L569.5 9" stroke="#484848" stroke-width="2.4" stroke-linecap="round"/><path d="M565.0 12 L566.5 13.5 M567.0 10 L568.5 11.5" stroke="#484848" stroke-width="1"/>
<path d="M570.5 14.5 L575.5 9" stroke="#484848" stroke-width="2.4" stroke-linecap="round"/><path d="M571.0 12 L572.5 13.5 M573.0 10 L574.5 11.5" stroke="#484848" stroke-width="1"/>
<path d="M618.5 14.5 L623.5 9" stroke="#484848" stroke-width="2.4" stroke-linecap="round"/><path d="M619.0 12 L620.5 13.5 M621.0 10 L622.5 11.5" stroke="#484848" stroke-width="1"/>
<path d="M624.5 14.5 L629.5 9" stroke="#484848" stroke-width="2.4" stroke-linecap="round"/><path d="M625.0 12 L626.5 13.5 M627.0 10 L628.5 11.5" stroke="#484848" stroke-width="1"/>
<path d="M630.5 14.5 L635.5 9" stroke="#484848" stroke-width="2.4" stroke-linecap="round"/><path d="M631.0 12 L632.5 13.5 M633.0 10 L634.5 11.5" stroke="#484848" stroke-width="1"/>
<g transform="translate(167,19)"><rect x="1.5" y="1.5" width="8.5" height="19.5" fill="#fff" stroke="#777" stroke-width="1"/><rect x="10" y="1" width="11.5" height="9" fill="#5aa7e6"/></g>
<rect x="177.5" y="44" width="2" height="5" fill="#c3c3c3"/>
<g transform="translate(197,19)"><rect x="1.5" y="5.5" width="16" height="15.5" fill="#fff" stroke="#8a8a8a" stroke-width="1.4"/><path d="M4 8 L9.5 1.5 H21 L15.5 8 Z" fill="#6ab0ea"/><path d="M15.5 8 L21 1.5 V12 L15.5 18.5 Z" fill="#3d8fd6"/><rect x="5" y="9" width="9.5" height="9" fill="#fff" stroke="#555" stroke-width="1.2"/></g>
<rect x="207.5" y="44" width="2" height="5" fill="#c3c3c3"/>
<g transform="translate(227,19)"><rect x="1.5" y="1.5" width="17" height="17" fill="none" stroke="#aaa" stroke-width="1"/><path d="M6 6 H13 M6 6 V15" stroke="#888" stroke-width="0.8"/><path d="M13 6 Q13 14 6 15" fill="none" stroke="#555" stroke-width="1"/><g fill="#2b8de0"><circle cx="1.5" cy="1.5" r="1.3"/><circle cx="18.5" cy="1.5" r="1.3"/><circle cx="1.5" cy="18.5" r="1.3"/><circle cx="6" cy="6" r="1.2"/><circle cx="13" cy="6" r="1.2"/><circle cx="6" cy="15" r="1.2"/></g><path d="M12 20 L18.5 13.5" stroke="#f0b840" stroke-width="3.6"/><path d="M18.3 13.7 L20 12" stroke="#e83a3a" stroke-width="3.6"/><path d="M10.5 21.5 L12 20" stroke="#444" stroke-width="1.5"/></g>
<rect x="237.5" y="44" width="2" height="5" fill="#c3c3c3"/>
<g transform="translate(257,19)"><path d="M1 4.5 L4.5 1 H16 L12.5 4.5 Z" fill="#8cc6f2"/><rect x="1" y="4.5" width="11.5" height="14" fill="#5ea8e4"/><path d="M12.5 4.5 L16 1 V15 L12.5 18.5 Z" fill="#3f8fd0"/><path d="M1 18.5 H12.5 L16 15 V17 L12.5 20.5 H1 Z" fill="#bdbdbd"/><path d="M19 17 V3" stroke="#333" stroke-width="1.1"/><path d="M17.3 4.5 L19 1 L20.7 4.5 Z" fill="#333"/></g>
<rect x="267.5" y="44" width="2" height="5" fill="#c3c3c3"/>
<g transform="translate(287,19)"><path d="M1.5 6 L6 1.5 H13 Q20 2 20 9 V16 L15.5 20.5 H1.5 Z" fill="#dcdcdc" stroke="#6a6a6a" stroke-width="1.1"/><path d="M15.5 20.5 V12 L20 8 V16 Z" fill="#b8b8b8"/><path d="M11 2 Q19 2 20 10 L15.5 12 Q15 6.5 9 6.5 Z" fill="#5aa7e6"/></g>
<rect x="297.5" y="44" width="2" height="5" fill="#c3c3c3"/>
<g transform="translate(317,19)"><g fill="#5aa7e6"><circle cx="9.5" cy="3.1" r="2.6"/><circle cx="15.6" cy="7" r="2.6"/><circle cx="15.6" cy="13.5" r="2.6"/><circle cx="9.5" cy="17.2" r="2.6"/><circle cx="4.6" cy="13.5" r="2.6"/></g><circle cx="4.6" cy="7" r="2.1" fill="#fff" stroke="#888" stroke-width="0.9"/></g>
<rect x="327.5" y="44" width="2" height="5" fill="#c3c3c3"/>
<g transform="translate(347,19)"><path d="M1.5 8 L6 3.5 H13 L19 9 V16 L15 20.5 H1.5 Z" fill="#dcdcdc" stroke="#555" stroke-width="1.3"/><path d="M15 20.5 V12 L19 9 V16 Z" fill="#b5b5b5"/><path d="M15 0 L16.2 4 L20 2.5 L18 6 L21.5 7.5 L17.8 8.5 L19 12 L15.5 10 L14 13 L13 9.5 L9.5 10.5 L11.5 7 L9 4.5 L12.8 4.5 Z" fill="#f7a20f"/></g>
<rect x="357.5" y="44" width="2" height="5" fill="#c3c3c3"/>
<g transform="translate(377,19)"><path d="M1.5 6 L6 1.5 H15 L20 6 V16 L15.5 20.5 H1.5 Z" fill="#d6d9de" stroke="#444" stroke-width="1.2"/><path d="M14 6 L19 9 V18 L14 20 Z" fill="#8a93a3"/><path d="M19.5 9 H21.5 V17 H19.5 Z" fill="#333"/><path d="M12 5 L15 2.5 L17 6 L14 9 Z" fill="#a9b1bf"/></g>
<rect x="387.5" y="44" width="2" height="5" fill="#c3c3c3"/>
<g transform="translate(407,19)"><rect x="1.5" y="1.5" width="8.5" height="19.5" fill="#fff" stroke="#777" stroke-width="1"/><rect x="10" y="1" width="11.5" height="9" fill="#5aa7e6"/></g>
<rect x="417.5" y="44" width="2" height="5" fill="#c3c3c3"/>
<g transform="translate(437,19)"><rect x="1.5" y="5.5" width="16" height="15.5" fill="#fff" stroke="#8a8a8a" stroke-width="1.4"/><path d="M4 8 L9.5 1.5 H21 L15.5 8 Z" fill="#6ab0ea"/><path d="M15.5 8 L21 1.5 V12 L15.5 18.5 Z" fill="#3d8fd6"/><rect x="5" y="9" width="9.5" height="9" fill="#fff" stroke="#555" stroke-width="1.2"/></g>
<rect x="447.5" y="44" width="2" height="5" fill="#c3c3c3"/>
<g transform="translate(467,19)"><rect x="1.5" y="1.5" width="17" height="17" fill="none" stroke="#aaa" stroke-width="1"/><path d="M6 6 H13 M6 6 V15" stroke="#888" stroke-width="0.8"/><path d="M13 6 Q13 14 6 15" fill="none" stroke="#555" stroke-width="1"/><g fill="#2b8de0"><circle cx="1.5" cy="1.5" r="1.3"/><circle cx="18.5" cy="1.5" r="1.3"/><circle cx="1.5" cy="18.5" r="1.3"/><circle cx="6" cy="6" r="1.2"/><circle cx="13" cy="6" r="1.2"/><circle cx="6" cy="15" r="1.2"/></g><path d="M12 20 L18.5 13.5" stroke="#f0b840" stroke-width="3.6"/><path d="M18.3 13.7 L20 12" stroke="#e83a3a" stroke-width="3.6"/><path d="M10.5 21.5 L12 20" stroke="#444" stroke-width="1.5"/></g>
<rect x="477.5" y="44" width="2" height="5" fill="#c3c3c3"/>
<g transform="translate(497,19)"><path d="M1 4.5 L4.5 1 H16 L12.5 4.5 Z" fill="#8cc6f2"/><rect x="1" y="4.5" width="11.5" height="14" fill="#5ea8e4"/><path d="M12.5 4.5 L16 1 V15 L12.5 18.5 Z" fill="#3f8fd0"/><path d="M1 18.5 H12.5 L16 15 V17 L12.5 20.5 H1 Z" fill="#bdbdbd"/><path d="M19 17 V3" stroke="#333" stroke-width="1.1"/><path d="M17.3 4.5 L19 1 L20.7 4.5 Z" fill="#333"/></g>
<rect x="507.5" y="44" width="2" height="5" fill="#c3c3c3"/>
<g transform="translate(527,19)"><rect x="1.5" y="1.5" width="8.5" height="19.5" fill="#fff" stroke="#777" stroke-width="1"/><rect x="10" y="1" width="11.5" height="9" fill="#5aa7e6"/></g>
<rect x="537.5" y="44" width="2" height="5" fill="#c3c3c3"/>
<g transform="translate(557,19)"><path d="M1.5 8 L6 3.5 H13 L19 9 V16 L15 20.5 H1.5 Z" fill="#dcdcdc" stroke="#555" stroke-width="1.3"/><path d="M15 20.5 V12 L19 9 V16 Z" fill="#b5b5b5"/><path d="M15 0 L16.2 4 L20 2.5 L18 6 L21.5 7.5 L17.8 8.5 L19 12 L15.5 10 L14 13 L13 9.5 L9.5 10.5 L11.5 7 L9 4.5 L12.8 4.5 Z" fill="#f7a20f"/></g>
<rect x="567.5" y="44" width="2" height="5" fill="#c3c3c3"/>
<g transform="translate(587,19)"><rect x="1.5" y="1.5" width="17" height="17" fill="none" stroke="#aaa" stroke-width="1"/><path d="M6 6 H13 M6 6 V15" stroke="#888" stroke-width="0.8"/><path d="M13 6 Q13 14 6 15" fill="none" stroke="#555" stroke-width="1"/><g fill="#2b8de0"><circle cx="1.5" cy="1.5" r="1.3"/><circle cx="18.5" cy="1.5" r="1.3"/><circle cx="1.5" cy="18.5" r="1.3"/><circle cx="6" cy="6" r="1.2"/><circle cx="13" cy="6" r="1.2"/><circle cx="6" cy="15" r="1.2"/></g><path d="M12 20 L18.5 13.5" stroke="#f0b840" stroke-width="3.6"/><path d="M18.3 13.7 L20 12" stroke="#e83a3a" stroke-width="3.6"/><path d="M10.5 21.5 L12 20" stroke="#444" stroke-width="1.5"/></g>
<rect x="597.5" y="44" width="2" height="5" fill="#c3c3c3"/>
<g transform="translate(617,19)"><path d="M1 4.5 L4.5 1 H16 L12.5 4.5 Z" fill="#8cc6f2"/><rect x="1" y="4.5" width="11.5" height="14" fill="#5ea8e4"/><path d="M12.5 4.5 L16 1 V15 L12.5 18.5 Z" fill="#3f8fd0"/><path d="M1 18.5 H12.5 L16 15 V17 L12.5 20.5 H1 Z" fill="#bdbdbd"/><path d="M19 17 V3" stroke="#333" stroke-width="1.1"/><path d="M17.3 4.5 L19 1 L20.7 4.5 Z" fill="#333"/></g>
<rect x="627.5" y="44" width="2" height="5" fill="#c3c3c3"/>
<g transform="translate(647,19)"><path d="M1 4.5 L4.5 1 H16 L12.5 4.5 Z" fill="#8cc6f2"/><rect x="1" y="4.5" width="11.5" height="14" fill="#5ea8e4"/><path d="M12.5 4.5 L16 1 V15 L12.5 18.5 Z" fill="#3f8fd0"/><path d="M1 18.5 H12.5 L16 15 V17 L12.5 20.5 H1 Z" fill="#bdbdbd"/><path d="M19 17 V3" stroke="#333" stroke-width="1.1"/><path d="M17.3 4.5 L19 1 L20.7 4.5 Z" fill="#333"/></g>
<rect x="657.5" y="44" width="2" height="5" fill="#c3c3c3"/>
<g transform="translate(677,19)"><rect x="1.5" y="1.5" width="17" height="17" fill="none" stroke="#aaa" stroke-width="1"/><path d="M6 6 H13 M6 6 V15" stroke="#888" stroke-width="0.8"/><path d="M13 6 Q13 14 6 15" fill="none" stroke="#555" stroke-width="1"/><g fill="#2b8de0"><circle cx="1.5" cy="1.5" r="1.3"/><circle cx="18.5" cy="1.5" r="1.3"/><circle cx="1.5" cy="18.5" r="1.3"/><circle cx="6" cy="6" r="1.2"/><circle cx="13" cy="6" r="1.2"/><circle cx="6" cy="15" r="1.2"/></g><path d="M12 20 L18.5 13.5" stroke="#f0b840" stroke-width="3.6"/><path d="M18.3 13.7 L20 12" stroke="#e83a3a" stroke-width="3.6"/><path d="M10.5 21.5 L12 20" stroke="#444" stroke-width="1.5"/></g>
<rect x="687.5" y="44" width="2" height="5" fill="#c3c3c3"/>
<g transform="translate(707,19)"><path d="M1 4.5 L4.5 1 H16 L12.5 4.5 Z" fill="#8cc6f2"/><rect x="1" y="4.5" width="11.5" height="14" fill="#5ea8e4"/><path d="M12.5 4.5 L16 1 V15 L12.5 18.5 Z" fill="#3f8fd0"/><path d="M1 18.5 H12.5 L16 15 V17 L12.5 20.5 H1 Z" fill="#bdbdbd"/><path d="M19 17 V3" stroke="#333" stroke-width="1.1"/><path d="M17.3 4.5 L19 1 L20.7 4.5 Z" fill="#333"/></g>
<rect x="717.5" y="44" width="2" height="5" fill="#c3c3c3"/>
<g transform="translate(737,19)"><path d="M1 4.5 L4.5 1 H16 L12.5 4.5 Z" fill="#8cc6f2"/><rect x="1" y="4.5" width="11.5" height="14" fill="#5ea8e4"/><path d="M12.5 4.5 L16 1 V15 L12.5 18.5 Z" fill="#3f8fd0"/><path d="M1 18.5 H12.5 L16 15 V17 L12.5 20.5 H1 Z" fill="#bdbdbd"/><path d="M19 17 V3" stroke="#333" stroke-width="1.1"/><path d="M17.3 4.5 L19 1 L20.7 4.5 Z" fill="#333"/></g>
<rect x="747.5" y="44" width="2" height="5" fill="#c3c3c3"/>
<g transform="translate(767,19)"><rect x="1.5" y="5.5" width="16" height="15.5" fill="#fff" stroke="#8a8a8a" stroke-width="1.4"/><path d="M4 8 L9.5 1.5 H21 L15.5 8 Z" fill="#6ab0ea"/><path d="M15.5 8 L21 1.5 V12 L15.5 18.5 Z" fill="#3d8fd6"/><rect x="5" y="9" width="9.5" height="9" fill="#fff" stroke="#555" stroke-width="1.2"/></g>
<rect x="777.5" y="44" width="2" height="5" fill="#c3c3c3"/>
<g transform="translate(797,19)"><path d="M1.5 6 L6 1.5 H13 Q20 2 20 9 V16 L15.5 20.5 H1.5 Z" fill="#dcdcdc" stroke="#6a6a6a" stroke-width="1.1"/><path d="M15.5 20.5 V12 L20 8 V16 Z" fill="#b8b8b8"/><path d="M11 2 Q19 2 20 10 L15.5 12 Q15 6.5 9 6.5 Z" fill="#5aa7e6"/></g>
<rect x="807.5" y="44" width="2" height="5" fill="#c3c3c3"/>
<g transform="translate(827,19)"><path d="M1.5 11 L10 1.5 H16 L20.5 6 V20.5 H6 L1.5 16 Z" fill="#dcdcdc" stroke="#6a6a6a" stroke-width="1.1"/><path d="M1.5 10.5 L10 1.5 L13.5 5.5 L5 14.5 Z" fill="#5aa7e6"/></g>
<rect x="837.5" y="44" width="2" height="5" fill="#c3c3c3"/>
<g transform="translate(857,19)"><rect x="1.5" y="1.5" width="17" height="17" fill="none" stroke="#aaa" stroke-width="1"/><path d="M6 6 H13 M6 6 V15" stroke="#888" stroke-width="0.8"/><path d="M13 6 Q13 14 6 15" fill="none" stroke="#555" stroke-width="1"/><g fill="#2b8de0"><circle cx="1.5" cy="1.5" r="1.3"/><circle cx="18.5" cy="1.5" r="1.3"/><circle cx="1.5" cy="18.5" r="1.3"/><circle cx="6" cy="6" r="1.2"/><circle cx="13" cy="6" r="1.2"/><circle cx="6" cy="15" r="1.2"/></g><path d="M12 20 L18.5 13.5" stroke="#f0b840" stroke-width="3.6"/><path d="M18.3 13.7 L20 12" stroke="#e83a3a" stroke-width="3.6"/><path d="M10.5 21.5 L12 20" stroke="#444" stroke-width="1.5"/></g>
<rect x="867.5" y="44" width="2" height="5" fill="#c3c3c3"/>
<g transform="translate(887,19)"><path d="M1 4.5 L4.5 1 H16 L12.5 4.5 Z" fill="#8cc6f2"/><rect x="1" y="4.5" width="11.5" height="14" fill="#5ea8e4"/><path d="M12.5 4.5 L16 1 V15 L12.5 18.5 Z" fill="#3f8fd0"/><path d="M1 18.5 H12.5 L16 15 V17 L12.5 20.5 H1 Z" fill="#bdbdbd"/><path d="M19 17 V3" stroke="#333" stroke-width="1.1"/><path d="M17.3 4.5 L19 1 L20.7 4.5 Z" fill="#333"/></g>
<rect x="897.5" y="44" width="2" height="5" fill="#c3c3c3"/>
<path d="M905 12 H920 V17 H917 L913.5 23 V49 H911 V23 L908 17 H905 Z" fill="#555"/>
<g fill="#666"><rect x="0" y="29" width="1.5" height="14"/><path d="M1.5 36 L12.2 29 V43 Z"/><path d="M29.4 36 L42 29.5 V42.5 Z"/><rect x="43.3" y="33.6" width="2.2" height="6"/><path d="M61.2 26 L76.4 35.3 L61.2 44.6 Z"/><rect x="91" y="33.6" width="2.5" height="6"/><path d="M95.2 29 L107 35.8 L95.2 42.5 Z"/><path d="M123.3 29 L134.2 35.8 L123.3 42.5 Z"/><rect x="134.7" y="28.2" width="2.4" height="15.2"/></g>
<path d="M967.71 33.55 L967.71 37.25 L964.91 37.92 L964.85 38.08 L966.35 40.54 L963.74 43.15 L961.28 41.65 L961.12 41.71 L960.45 44.51 L956.75 44.51 L956.08 41.71 L955.92 41.65 L953.46 43.15 L950.85 40.54 L952.35 38.08 L952.29 37.92 L949.49 37.25 L949.49 33.55 L952.29 32.88 L952.35 32.72 L950.85 30.26 L953.46 27.65 L955.92 29.15 L956.08 29.09 L956.75 26.29 L960.45 26.29 L961.12 29.09 L961.28 29.15 L963.74 27.65 L966.35 30.26 L964.85 32.72 L964.91 32.88 Z" fill="#777"/><circle cx="958.6" cy="35.4" r="3.2" fill="#f0f0f0"/></svg>

</body></html>
